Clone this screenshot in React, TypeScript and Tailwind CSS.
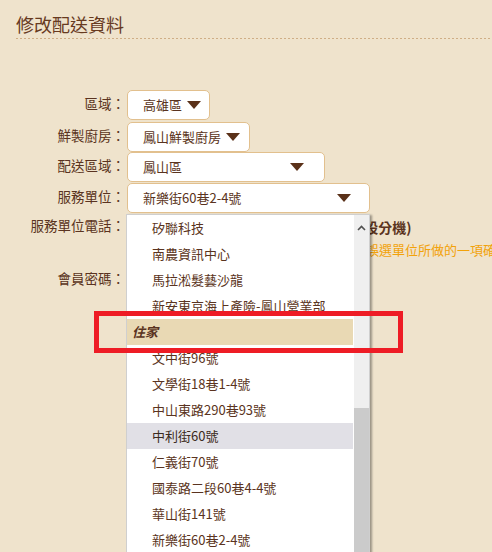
import React from "react";

const Tri = () => (
  <svg width="14" height="8" viewBox="0 0 14 8" className="shrink-0">
    <polygon points="0,0 14,0 7,8" fill="#5a3119" />
  </svg>
);

const items: { t: string; kind?: "group" | "hl" }[] = [
  { t: "矽聯科技" },
  { t: "南農資訊中心" },
  { t: "馬拉淞髮藝沙龍" },
  { t: "新安東京海上產險-鳳山營業部" },
  { t: "住家", kind: "group" },
  { t: "文中街96號" },
  { t: "文學街18巷1-4號" },
  { t: "中山東路290巷93號" },
  { t: "中利街60號", kind: "hl" },
  { t: "仁義街70號" },
  { t: "國泰路二段60巷4-4號" },
  { t: "華山街141號" },
  { t: "新樂街60巷2-4號" },
];

function Label({ children }: { children: React.ReactNode }) {
  return (
    <div className="w-[125px] shrink-0 text-right text-[13.5px] leading-[18px] text-[#5a3320] -mt-[4px] whitespace-nowrap">
      {children}
    </div>
  );
}

function Sel({ w, text, pr }: { w: string; text: string; pr: string }) {
  return (
    <div
      className={`ml-[2px] h-[30px] ${w} ${pr} flex items-center justify-between pl-[15px] bg-white border border-[#e2c08e] rounded-[5px] text-[13px] text-[#5a3320]`}
    >
      <span className="whitespace-nowrap">{text}</span>
      <Tri />
    </div>
  );
}

export default function App() {
  return (
    <div className="relative w-[492px] h-[552px] overflow-hidden bg-[#efe3cc] font-['Noto_Sans_CJK_TC','Noto_Sans',sans-serif]">
      <div className="pl-4 pt-[12px]">
        <h2 className="text-[18px] leading-[24px] text-[#673a1f]">修改配送資料</h2>
        <div className="mt-[2px] h-px bg-[linear-gradient(to_right,#cfae86_50%,transparent_50%)] bg-[length:4px_1px]" />
      </div>

      <div className="mt-[50px] flex flex-col">
        <div className="flex items-center h-[32px]">
          <Label>區域：</Label>
          <Sel w="w-[83px]" text="高雄區" pr="pr-[8px]" />
        </div>
        <div className="flex items-center h-[31px]">
          <Label>鮮製廚房：</Label>
          <Sel w="w-[123px]" text="鳳山鮮製廚房" pr="pr-[9px]" />
        </div>
        <div className="flex items-center h-[30px]">
          <Label>配送區域：</Label>
          <Sel w="w-[198px]" text="鳳山區" pr="pr-[20px]" />
        </div>
        <div className="flex items-center h-[31px]">
          <Label>服務單位：</Label>
          <Sel w="w-[243px]" text="新樂街60巷2-4號" pr="pr-[18px]" />
        </div>
        <div className="flex items-center h-[28px]">
          <Label>服務單位電話：</Label>
          <span className="ml-[206px] whitespace-nowrap text-[14px] font-bold text-[#5a3320]">(請勿設分機)</span>
        </div>
        <div className="h-[17px] flex items-center overflow-hidden">
          <span className="ml-[340px] whitespace-nowrap text-[13px] text-[#f2a20a]">防止誤選單位所做的一項確認</span>
        </div>
        <div className="mt-[8px] flex items-center h-[28px]">
          <Label>會員密碼：</Label>
        </div>
      </div>

      {/* dropdown list */}
      <div className="absolute left-[126px] top-[214px] w-[244px] h-[360px] bg-white border border-[#cfcfcf] shadow-[2px_1px_2px_rgba(0,0,0,0.35)] flex">
        <div className="w-[226px] flex flex-col">
          {items.map((it, i) =>
            it.kind === "group" ? (
              <div
                key={i}
                className="h-[26px] shrink-0 flex items-center pl-[5px] bg-[#e9d9b4] text-[13px] font-bold italic text-[#5a3320]"
              >
                {it.t}
              </div>
            ) : (
              <div
                key={i}
                className={`h-[26px] shrink-0 flex items-center pl-[25px] text-[13px] whitespace-nowrap ${
                  it.kind === "hl" ? "bg-[#e1e0e6] text-[#3b2a20]" : "text-[#5a3320]"
                }`}
              >
                {it.t}
              </div>
            )
          )}
        </div>
        <div className="w-[15px] ml-[1px] bg-[#efefef] flex flex-col items-center">
          <svg width="9" height="6" viewBox="0 0 9 6" className="mt-[10px]">
            <polyline points="1,5 4.5,1.5 8,5" fill="none" stroke="#505050" strokeWidth="1.6" />
          </svg>
          <div className="mt-[177px] w-full h-[160px] bg-[#cbcbcb]" />
        </div>
      </div>

      {/* annotation */}
      <div className="absolute left-[94px] top-[311px] w-[309px] h-[42px] border-[5px] border-[#ee1c25]" />
    </div>
  );
}
